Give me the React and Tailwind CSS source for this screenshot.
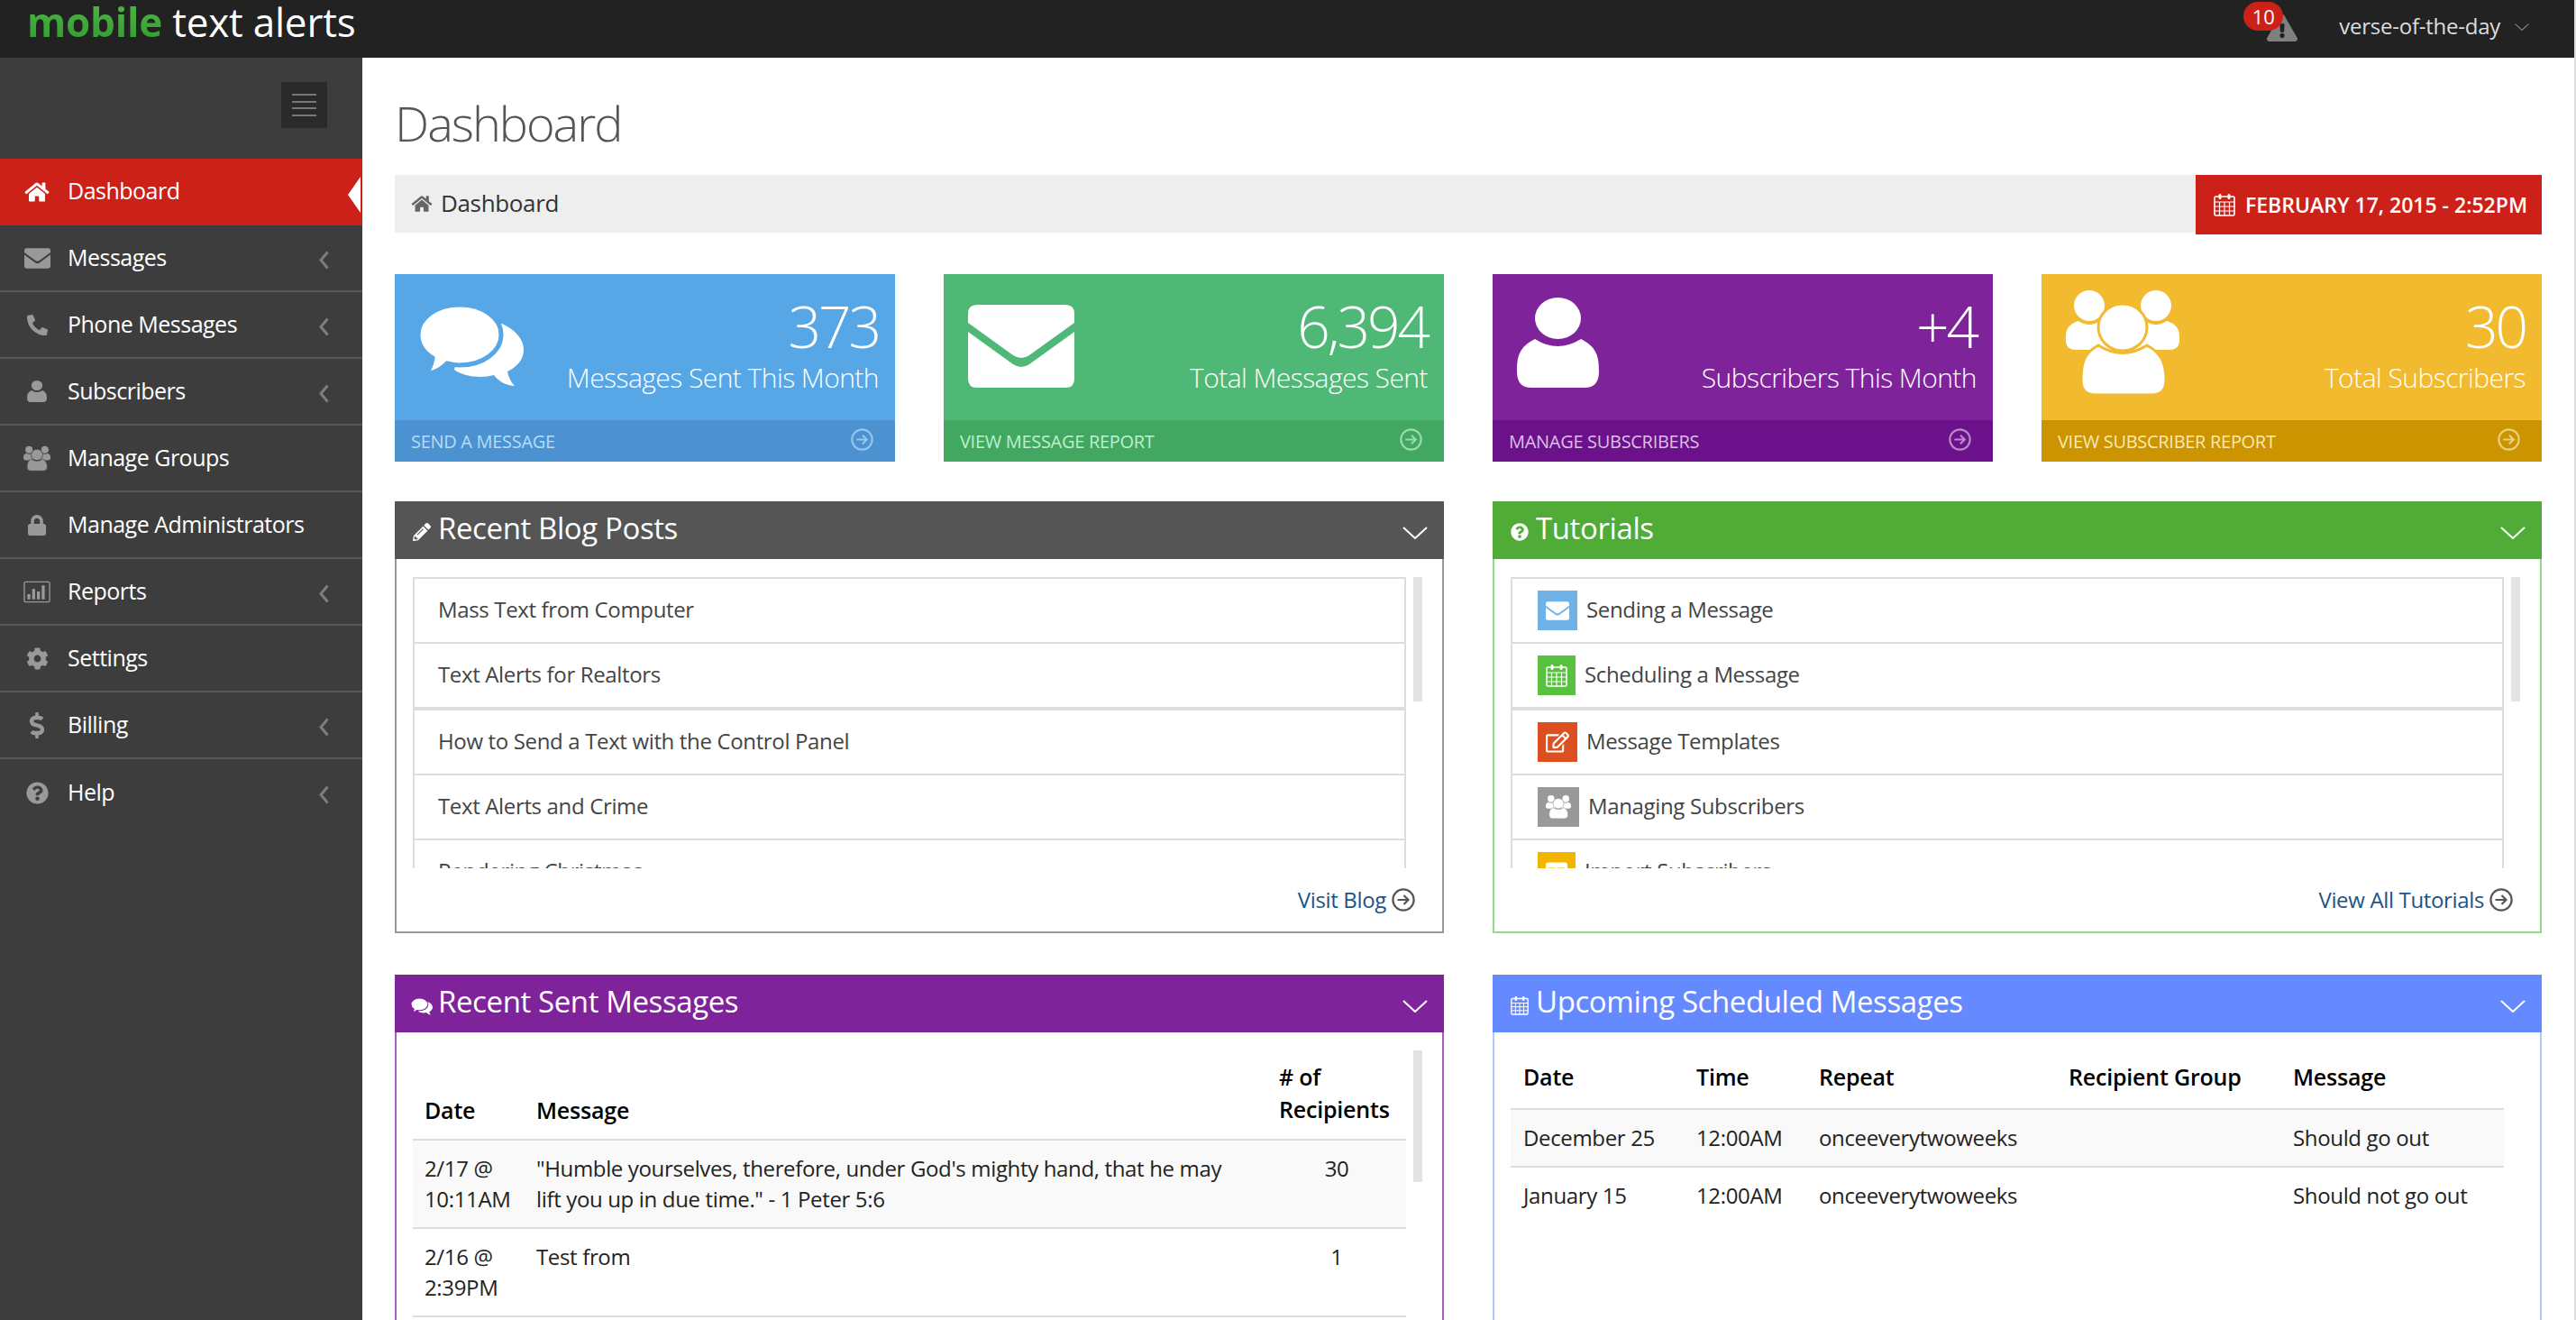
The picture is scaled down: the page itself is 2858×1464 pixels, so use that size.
import React from 'react';
import {
    FaHome, FaPhoneAlt, FaLock, FaCog, FaDollarSign, FaQuestionCircle,
    FaPencilAlt, FaExclamationTriangle, FaRegEdit, FaTable,
} from 'react-icons/fa';

/* ---------- drawn icons ---------- */
const ChatIcon = ({ className, cut }) => (
    <svg viewBox="0 0 117 92" className={className} fill="currentColor">
        <path d="M50 30L93 21C108 28 117 38 117 50C117 60 110 69 99 74C100 80 103 86 107 90C98 90 89 85 84 78C70 82 50 80 40 72Z" />
        <path d="M46 0C72 0 92 15 92 33C92 52 72 67 46 67C41 67 36 66 32 65C26 71 18 76 9 76C13 71 15 65 16 59C6 53 0 44 0 33C0 15 20 0 46 0Z" className={cut} strokeWidth="5" />
    </svg>
);

const EnvelopeIcon = ({ className }) => (
    <svg viewBox="0 0 118 92" className={className} fill="currentColor">
        <path d="M10 0H108Q118 0 118 10V20L68 56Q59 62 50 56L0 20V10Q0 0 10 0Z" />
        <path d="M0 30L50 66Q59 72 68 66L118 30V82Q118 92 108 92H10Q0 92 0 82Z" />
    </svg>
);

const UserIcon = ({ className }) => (
    <svg viewBox="0 0 91 100" className={className} fill="currentColor">
        <path d="M0 82C0 66 2 55 20 46Q45 62 71 46C89 55 91 66 91 82Q91 100 75 100H16Q0 100 0 82Z" />
        <ellipse cx="45.5" cy="23" rx="25.5" ry="23" />
    </svg>
);

const GroupIcon = ({ className, cut }) => (
    <svg viewBox="0 0 126 116" className={className} fill="currentColor">
        <ellipse cx="26" cy="17" rx="17" ry="17" />
        <ellipse cx="100" cy="17" rx="17" ry="17" />
        <path d="M0 52C0 42 4 37 14 34Q26 42 38 34L50 40V66H12Q0 66 0 56Z" />
        <path d="M126 52C126 42 122 37 112 34Q100 42 88 34L76 40V66H114Q126 66 126 56Z" />
        <path d="M17 100C17 82 19 70 36 61Q63 78 90 61C107 70 111 82 111 100Q111 116 95 116H33Q17 116 17 100Z" className={cut} strokeWidth="3" />
        <ellipse cx="63" cy="41" rx="27" ry="26" className={cut} strokeWidth="3" />
    </svg>
);

const CalendarIcon = ({ className }) => (
    <svg viewBox="0 0 24 26" className={className} fill="none" stroke="currentColor" strokeWidth="1.6">
        <rect x="1" y="4" width="22" height="21" rx="1.5" />
        <path d="M1 10H23M1 15H23M1 20H23M6.5 10V25M12 10V25M17.5 10V25" strokeWidth="1.2" />
        <rect x="5.5" y="1" width="3" height="6" rx="1.5" fill="currentColor" stroke="none" />
        <rect x="15.5" y="1" width="3" height="6" rx="1.5" fill="currentColor" stroke="none" />
    </svg>
);

const ChartIcon = ({ className }) => (
    <svg viewBox="0 0 31 25" className={className} fill="currentColor">
        <rect x="1" y="1" width="29" height="23" rx="1.5" fill="none" stroke="currentColor" strokeWidth="1.4" />
        <rect x="4.5" y="15" width="3.4" height="6" />
        <rect x="10" y="9" width="3.4" height="12" />
        <rect x="15.5" y="12" width="3.4" height="9" />
        <rect x="21" y="5" width="3.4" height="16" />
    </svg>
);

const ArrowCircle = ({ className }) => (
    <svg viewBox="0 0 26 26" className={className} fill="none" stroke="currentColor" strokeWidth="2.2">
        <circle cx="13" cy="13" r="11.6" />
        <path d="M6.5 13H18.5M13.5 8L18.5 13L13.5 18" />
    </svg>
);

const ChevronDown = ({ className }) => (
    <svg viewBox="0 0 28 14" className={className} fill="none" stroke="currentColor" strokeWidth="2">
        <path d="M1 1L14 13L27 1" />
    </svg>
);

const ChevronLeft = () => (
    <svg viewBox="0 0 11 21" className="w-[11px] h-[21px] text-[#7d7d7d] mt-[5px]" fill="none" stroke="currentColor" strokeWidth="3">
        <path d="M9.5 1.5L2 10.5L9.5 19.5" />
    </svg>
);

/* ---------- data ---------- */
const navItems = [
    { label: 'Messages', icon: <EnvelopeIcon className="w-[29px] h-[23px]" />, arrow: true },
    { label: 'Phone Messages', icon: <FaPhoneAlt className="w-[23px] h-[23px]" />, arrow: true },
    { label: 'Subscribers', icon: <UserIcon className="w-[22px] h-[24px]" />, arrow: true },
    { label: 'Manage Groups', icon: <GroupIcon className="w-[31px] h-[29px]" cut="stroke-[#3d3d3d]" /> },
    { label: 'Manage Administrators', icon: <FaLock className="w-[20px] h-[23px]" /> },
    { label: 'Reports', icon: <ChartIcon className="w-[31px] h-[25px]" />, arrow: true },
    { label: 'Settings', icon: <FaCog className="w-[25px] h-[25px]" /> },
    { label: 'Billing', icon: <FaDollarSign className="w-[24px] h-[29px]" />, arrow: true },
    { label: 'Help', icon: <FaQuestionCircle className="w-[25px] h-[25px]" />, arrow: true },
];

const stats = [
    {
        value: '373', label: 'Messages Sent This Month', link: 'SEND A MESSAGE',
        box: 'bg-[#57a6e6]', foot: 'bg-[#4c92d0] text-[#b5dcf8]',
        icon: <ChatIcon className="w-[117px] h-[92px] ml-[26px] mt-[34px]" cut="stroke-[#57a6e6]" />,
    },
    {
        value: '6,394', label: 'Total Messages Sent', link: 'VIEW MESSAGE REPORT',
        box: 'bg-[#50b876]', foot: 'bg-[#42a760] text-[#bff0cf]',
        icon: <EnvelopeIcon className="w-[118px] h-[92px] ml-[27px] mt-[34px]" />,
    },
    {
        value: '+4', label: 'Subscribers This Month', link: 'MANAGE SUBSCRIBERS',
        box: 'bg-[#7f239b]', foot: 'bg-[#6b118a] text-[#dcbfe8]',
        icon: <UserIcon className="w-[91px] h-[100px] ml-[27px] mt-[26px]" />,
    },
    {
        value: '30', label: 'Total Subscribers', link: 'VIEW SUBSCRIBER REPORT',
        box: 'bg-[#f2ba2f]', foot: 'bg-[#cc9400] text-[#fbe9b0]',
        icon: <GroupIcon className="w-[126px] h-[116px] ml-[27px] mt-[18px]" cut="stroke-[#f2ba2f]" />,
    },
];

const blogPosts = ['Mass Text from Computer', 'Text Alerts for Realtors', 'How to Send a Text with the Control Panel', 'Text Alerts and Crime', 'Rendering Christmas'];

const tutorials = [
    { label: 'Sending a Message', box: 'bg-[#6fb2e8] w-[44px]', icon: <EnvelopeIcon className="w-[26px] h-[21px]" /> },
    { label: 'Scheduling a Message', box: 'bg-[#56c23f] w-[42px]', icon: <CalendarIcon className="w-[24px] h-[26px]" /> },
    { label: 'Message Templates', box: 'bg-[#dd4f1e] w-[44px]', icon: <FaRegEdit className="w-[26px] h-[24px]" /> },
    { label: 'Managing Subscribers', box: 'bg-[#999999] w-[46px]', icon: <GroupIcon className="w-[28px] h-[26px]" cut="stroke-[#999999]" /> },
    { label: 'Import Subscribers', box: 'bg-[#f2b600] w-[42px]', icon: <FaTable className="w-[24px] h-[24px]" /> },
];

const sentMessages = [
    { date: '2/17 @ 10:11AM', text: '"Humble yourselves, therefore, under God\'s mighty hand, that he may lift you up in due time." - 1 Peter 5:6', count: '30' },
    { date: '2/16 @ 2:39PM', text: 'Test from', count: '1' },
];

const scheduled = [
    { date: 'December 25', time: '12:00AM', repeat: 'onceeverytwoweeks', message: 'Should go out' },
    { date: 'January 15', time: '12:00AM', repeat: 'onceeverytwoweeks', message: 'Should not go out' },
];

/* ---------- pieces ---------- */
const Panel = ({ title, icon, head, border, children }) => (
    <div className={`border-2 ${border} border-t-0`}>
        <div className={`h-[64px] ${head} -mx-[2px] pl-[20px] pr-[18px] flex items-center text-white`}>
            <span className="w-[22px] flex justify-start">{icon}</span>
            <span className="ml-[6px] pb-[5px] text-[33px] tracking-[-0.4px] flex-1">{title}</span>
            <ChevronDown className="w-[28px] h-[14px] mt-[6px]" />
        </div>
        {children}
    </div>
);

const Scrollbar = ({ h }) => <div className={`w-[10px] ${h} bg-[#e3e3e3] shrink-0`} />;

const PanelLink = ({ label }) => (
    <div className="h-[70px] flex items-center justify-end gap-[6px] pr-[30px] text-[24px] tracking-[-0.35px] text-[#1d5286]">
        {label}
        <ArrowCircle className="w-[26px] h-[26px] text-[#555555]" />
    </div>
);

const App = () => {
    return (
        <div className="w-[2858px] h-[1464px] overflow-hidden flex font-['Open_Sans',sans-serif] text-[26px] text-[#444444] bg-white">
            <div className="flex-1 flex flex-col min-w-0">
                {/* Top bar */}
                <header className="h-[64px] shrink-0 bg-[#222222] flex items-start pl-[30px] pr-[50px]">
                    <div className="text-[44px] leading-[48px] tracking-[-0.2px] whitespace-nowrap text-white">
                        <span className="font-bold bg-linear-to-b from-[#52b848] to-[#2f9a2d] bg-clip-text text-transparent">mobile</span> text alerts
                    </div>
                    <div className="ml-auto flex items-start">
                        <div className="relative w-[60px] h-[64px]">
                            <FaExclamationTriangle className="absolute left-[26px] top-[15px] w-[34px] h-[32px] text-[#808080]" />
                            <span className="absolute left-0 top-[2px] w-[44px] h-[32px] rounded-full bg-[#cc2119] text-white text-[22px] leading-[32px] text-center">10</span>
                        </div>
                        <span className="ml-[46px] mt-[11px] text-[24px] leading-[36px] tracking-[-0.25px] text-[#dddddd]">verse-of-the-day</span>
                        <ChevronDown className="w-[16px] h-[8px] ml-[16px] mt-[26px] text-[#888888]" />
                    </div>
                </header>

                <div className="flex-1 flex min-h-0">
                    {/* Sidebar */}
                    <aside className="w-[402px] shrink-0 bg-[#3d3d3d] text-white text-[25px]">
                        <div className="h-[112px] pt-[27px] pl-[312px]">
                            <div className="w-[51px] h-[51px] bg-[#2a2a2a] flex flex-col items-center justify-center gap-[5.5px]">
                                <span className="w-[27px] h-[2px] bg-[#777777]" />
                                <span className="w-[27px] h-[2px] bg-[#777777]" />
                                <span className="w-[27px] h-[2px] bg-[#777777]" />
                                <span className="w-[27px] h-[2px] bg-[#777777]" />
                            </div>
                        </div>
                        <nav>
                            <div className="relative h-[74px] bg-[#cc2119] flex items-center pl-[26px]">
                                <span className="w-[30px] flex justify-center"><FaHome className="w-[28px] h-[24px]" /></span>
                                <span className="ml-[19px] pb-[2px] tracking-[-0.5px]">Dashboard</span>
                                <svg viewBox="0 0 14 40" className="absolute right-[2px] top-[20px] w-[14px] h-[40px] text-white" fill="currentColor">
                                    <path d="M0 20L14 0V40Z" />
                                </svg>
                            </div>
                            {navItems.map((item, i) => (
                                <div key={item.label} className={`h-[74px] flex items-center pl-[26px] pr-[37px] ${i < navItems.length - 1 ? 'border-b-2 border-[#575757]' : ''}`}>
                                    <span className="w-[30px] flex justify-center text-[#999999]">{item.icon}</span>
                                    <span className="ml-[19px] tracking-[-0.5px] flex-1">{item.label}</span>
                                    {item.arrow && <ChevronLeft />}
                                </div>
                            ))}
                        </nav>
                    </aside>

                    {/* Main */}
                    <main className="flex-1 min-w-0 pl-[36px] pr-[36px]">
                        <h1 className="h-[130px] flex items-center pt-[14px] text-[54px] font-light text-[#555555] tracking-[-2px]">Dashboard</h1>

                        {/* Breadcrumb */}
                        <div className="h-[64px] bg-[#eeeeee] flex items-start">
                            <div className="flex items-center h-[64px] pl-[18px] text-[#333333]">
                                <FaHome className="w-[24px] h-[20px] text-[#666666]" />
                                <span className="ml-[9px] pb-[2px] tracking-[-0.35px]">Dashboard</span>
                            </div>
                            <div className="ml-auto w-[384px] h-[66px] bg-[#cc2119] text-white flex items-center pl-[20px] text-[23px] font-semibold whitespace-nowrap">
                                <CalendarIcon className="w-[24px] h-[26px]" />
                                <span className="ml-[11px]">FEBRUARY 17, 2015 - 2:52PM</span>
                            </div>
                        </div>

                        {/* Stat cards */}
                        <div className="mt-[46px] grid grid-cols-4 gap-[54px]">
                            {stats.map((s) => (
                                <div key={s.label} className={`h-[208px] ${s.box} text-white flex flex-col`}>
                                    <div className="flex-1 flex justify-between min-h-0">
                                        <div>{s.icon}</div>
                                        <div className="pr-[18px] text-right font-light">
                                            <div className="text-[64px] leading-[64px] mt-[26px] tracking-[-3px]">{s.value}</div>
                                            <div className="text-[30px] leading-[40px] mt-[5px] tracking-[-0.55px] whitespace-nowrap">{s.label}</div>
                                        </div>
                                    </div>
                                    <div className={`h-[46px] ${s.foot} flex items-center justify-between pl-[18px] pr-[24px] text-[20px] tracking-[-0.3px]`}>
                                        <span className="pt-[2px]">{s.link}</span>
                                        <ArrowCircle className="w-[25px] h-[25px] -mt-[3px] opacity-70" />
                                    </div>
                                </div>
                            ))}
                        </div>

                        {/* Panels */}
                        <div className="mt-[44px] grid grid-cols-2 gap-x-[54px] gap-y-[46px]">
                            <Panel title="Recent Blog Posts" head="bg-[#555555]" border="border-[#999999]" icon={<FaPencilAlt className="w-[20px] h-[20px] mt-[4px]" />}>
                                <div className="pt-[20px] pl-[18px] pr-[22px] flex gap-[8px]">
                                    <div className="h-[323px] flex-1 overflow-hidden border-2 border-b-0 border-[#dddddd] text-[24px]">
                                        {blogPosts.map((post, i) => (
                                            <div key={post} className={`border-b-2 border-[#dddddd] flex items-center pl-[26px] pb-[2px] tracking-[-0.35px] ${i === 2 ? 'h-[74px] border-t-2' : 'h-[72px]'}`}>
                                                {post}
                                            </div>
                                        ))}
                                    </div>
                                    <Scrollbar h="h-[138px]" />
                                </div>
                                <PanelLink label="Visit Blog" />
                            </Panel>

                            <Panel title="Tutorials" head="bg-[#50ab37]" border="border-[#8fdc8a]" icon={<FaQuestionCircle className="w-[20px] h-[20px] mt-[4px]" />}>
                                <div className="pt-[20px] pl-[18px] pr-[22px] flex gap-[8px]">
                                    <div className="h-[323px] flex-1 overflow-hidden border-2 border-b-0 border-[#dddddd] text-[24px]">
                                        {tutorials.map((t, i) => (
                                            <div key={t.label} className={`border-b-2 border-[#dddddd] flex items-start pl-[28px] tracking-[-0.35px] ${i === 2 ? 'h-[74px] border-t-2' : 'h-[72px]'}`}>
                                                <span className={`${t.box} h-[44px] mt-[13px] shrink-0 flex items-center justify-center text-white`}>{t.icon}</span>
                                                <span className="ml-[10px] mt-[16px] leading-[36px]">{t.label}</span>
                                            </div>
                                        ))}
                                    </div>
                                    <Scrollbar h="h-[138px]" />
                                </div>
                                <PanelLink label="View All Tutorials" />
                            </Panel>

                            <Panel title="Recent Sent Messages" head="bg-[#7f239b]" border="border-[#a75cc4]" icon={<ChatIcon className="w-[24px] h-[19px] shrink-0 mt-[6px] -ml-[2px]" cut="stroke-[#7f239b]" />}>
                                <div className="pt-[20px] pl-[18px] pr-[22px] flex gap-[8px] text-[#222222] text-[24px] tracking-[-0.35px]">
                                    <table className="flex-1 table-fixed border-collapse leading-[34px] self-start">
                                        <thead>
                                            <tr className="border-b-2 border-[#dddddd] text-[25px] text-black text-left align-bottom tracking-[-0.2px]">
                                                <th className="w-[124px] pl-[13px] pb-[15px] font-semibold">Date</th>
                                                <th className="pl-[13px] pb-[15px] font-semibold">Message</th>
                                                <th className="w-[154px] pl-[13px] pt-[11px] pb-[15px] font-semibold leading-[36px]"># of<br />Recipients</th>
                                            </tr>
                                        </thead>
                                        <tbody>
                                            {sentMessages.map((m, i) => (
                                                <tr key={m.date} className={`border-b-2 border-[#dddddd] align-top ${i === 0 ? 'bg-[#f9f9f9]' : ''}`}>
                                                    <td className="pl-[13px] py-[14px]">{m.date}</td>
                                                    <td className="pl-[13px] pr-[30px] py-[14px]">{m.text}</td>
                                                    <td className="text-center py-[14px]">{m.count}</td>
                                                </tr>
                                            ))}
                                        </tbody>
                                    </table>
                                    <Scrollbar h="h-[146px]" />
                                </div>
                            </Panel>

                            <Panel title="Upcoming Scheduled Messages" head="bg-[#6589ff]" border="border-[#b3c7ff]" icon={<CalendarIcon className="w-[20px] h-[22px] mt-[4px]" />}>
                                <div className="pt-[20px] pl-[18px] pr-[40px] h-[400px] text-[#222222] text-[24px] tracking-[-0.35px]">
                                    <table className="w-full table-fixed border-collapse leading-[34px]">
                                        <thead>
                                            <tr className="border-b-2 border-[#dddddd] text-[25px] text-black text-left tracking-[-0.2px]">
                                                <th className="w-[192px] pl-[14px] pt-[12px] pb-[18px] font-semibold">Date</th>
                                                <th className="w-[136px] pl-[14px] pb-[6px] font-semibold">Time</th>
                                                <th className="w-[277px] pl-[14px] pb-[6px] font-semibold">Repeat</th>
                                                <th className="w-[249px] pl-[14px] pb-[6px] font-semibold">Recipient Group</th>
                                                <th className="pl-[14px] pb-[6px] font-semibold">Message</th>
                                            </tr>
                                        </thead>
                                        <tbody>
                                            {scheduled.map((r, i) => (
                                                <tr key={r.date} className={i === 0 ? 'bg-[#f9f9f9] border-b-2 border-[#dddddd]' : ''}>
                                                    <td className="pl-[14px] py-[14px] whitespace-nowrap">{r.date}</td>
                                                    <td className="pl-[14px] whitespace-nowrap">{r.time}</td>
                                                    <td className="pl-[14px] whitespace-nowrap">{r.repeat}</td>
                                                    <td />
                                                    <td className="pl-[14px] whitespace-nowrap">{r.message}</td>
                                                </tr>
                                            ))}
                                        </tbody>
                                    </table>
                                </div>
                            </Panel>
                        </div>
                    </main>
                </div>
            </div>
            {/* Browser scrollbar edge */}
            <div className="w-[2px] shrink-0 bg-[#dddddd]" />
        </div>
    );
};

export default App;
